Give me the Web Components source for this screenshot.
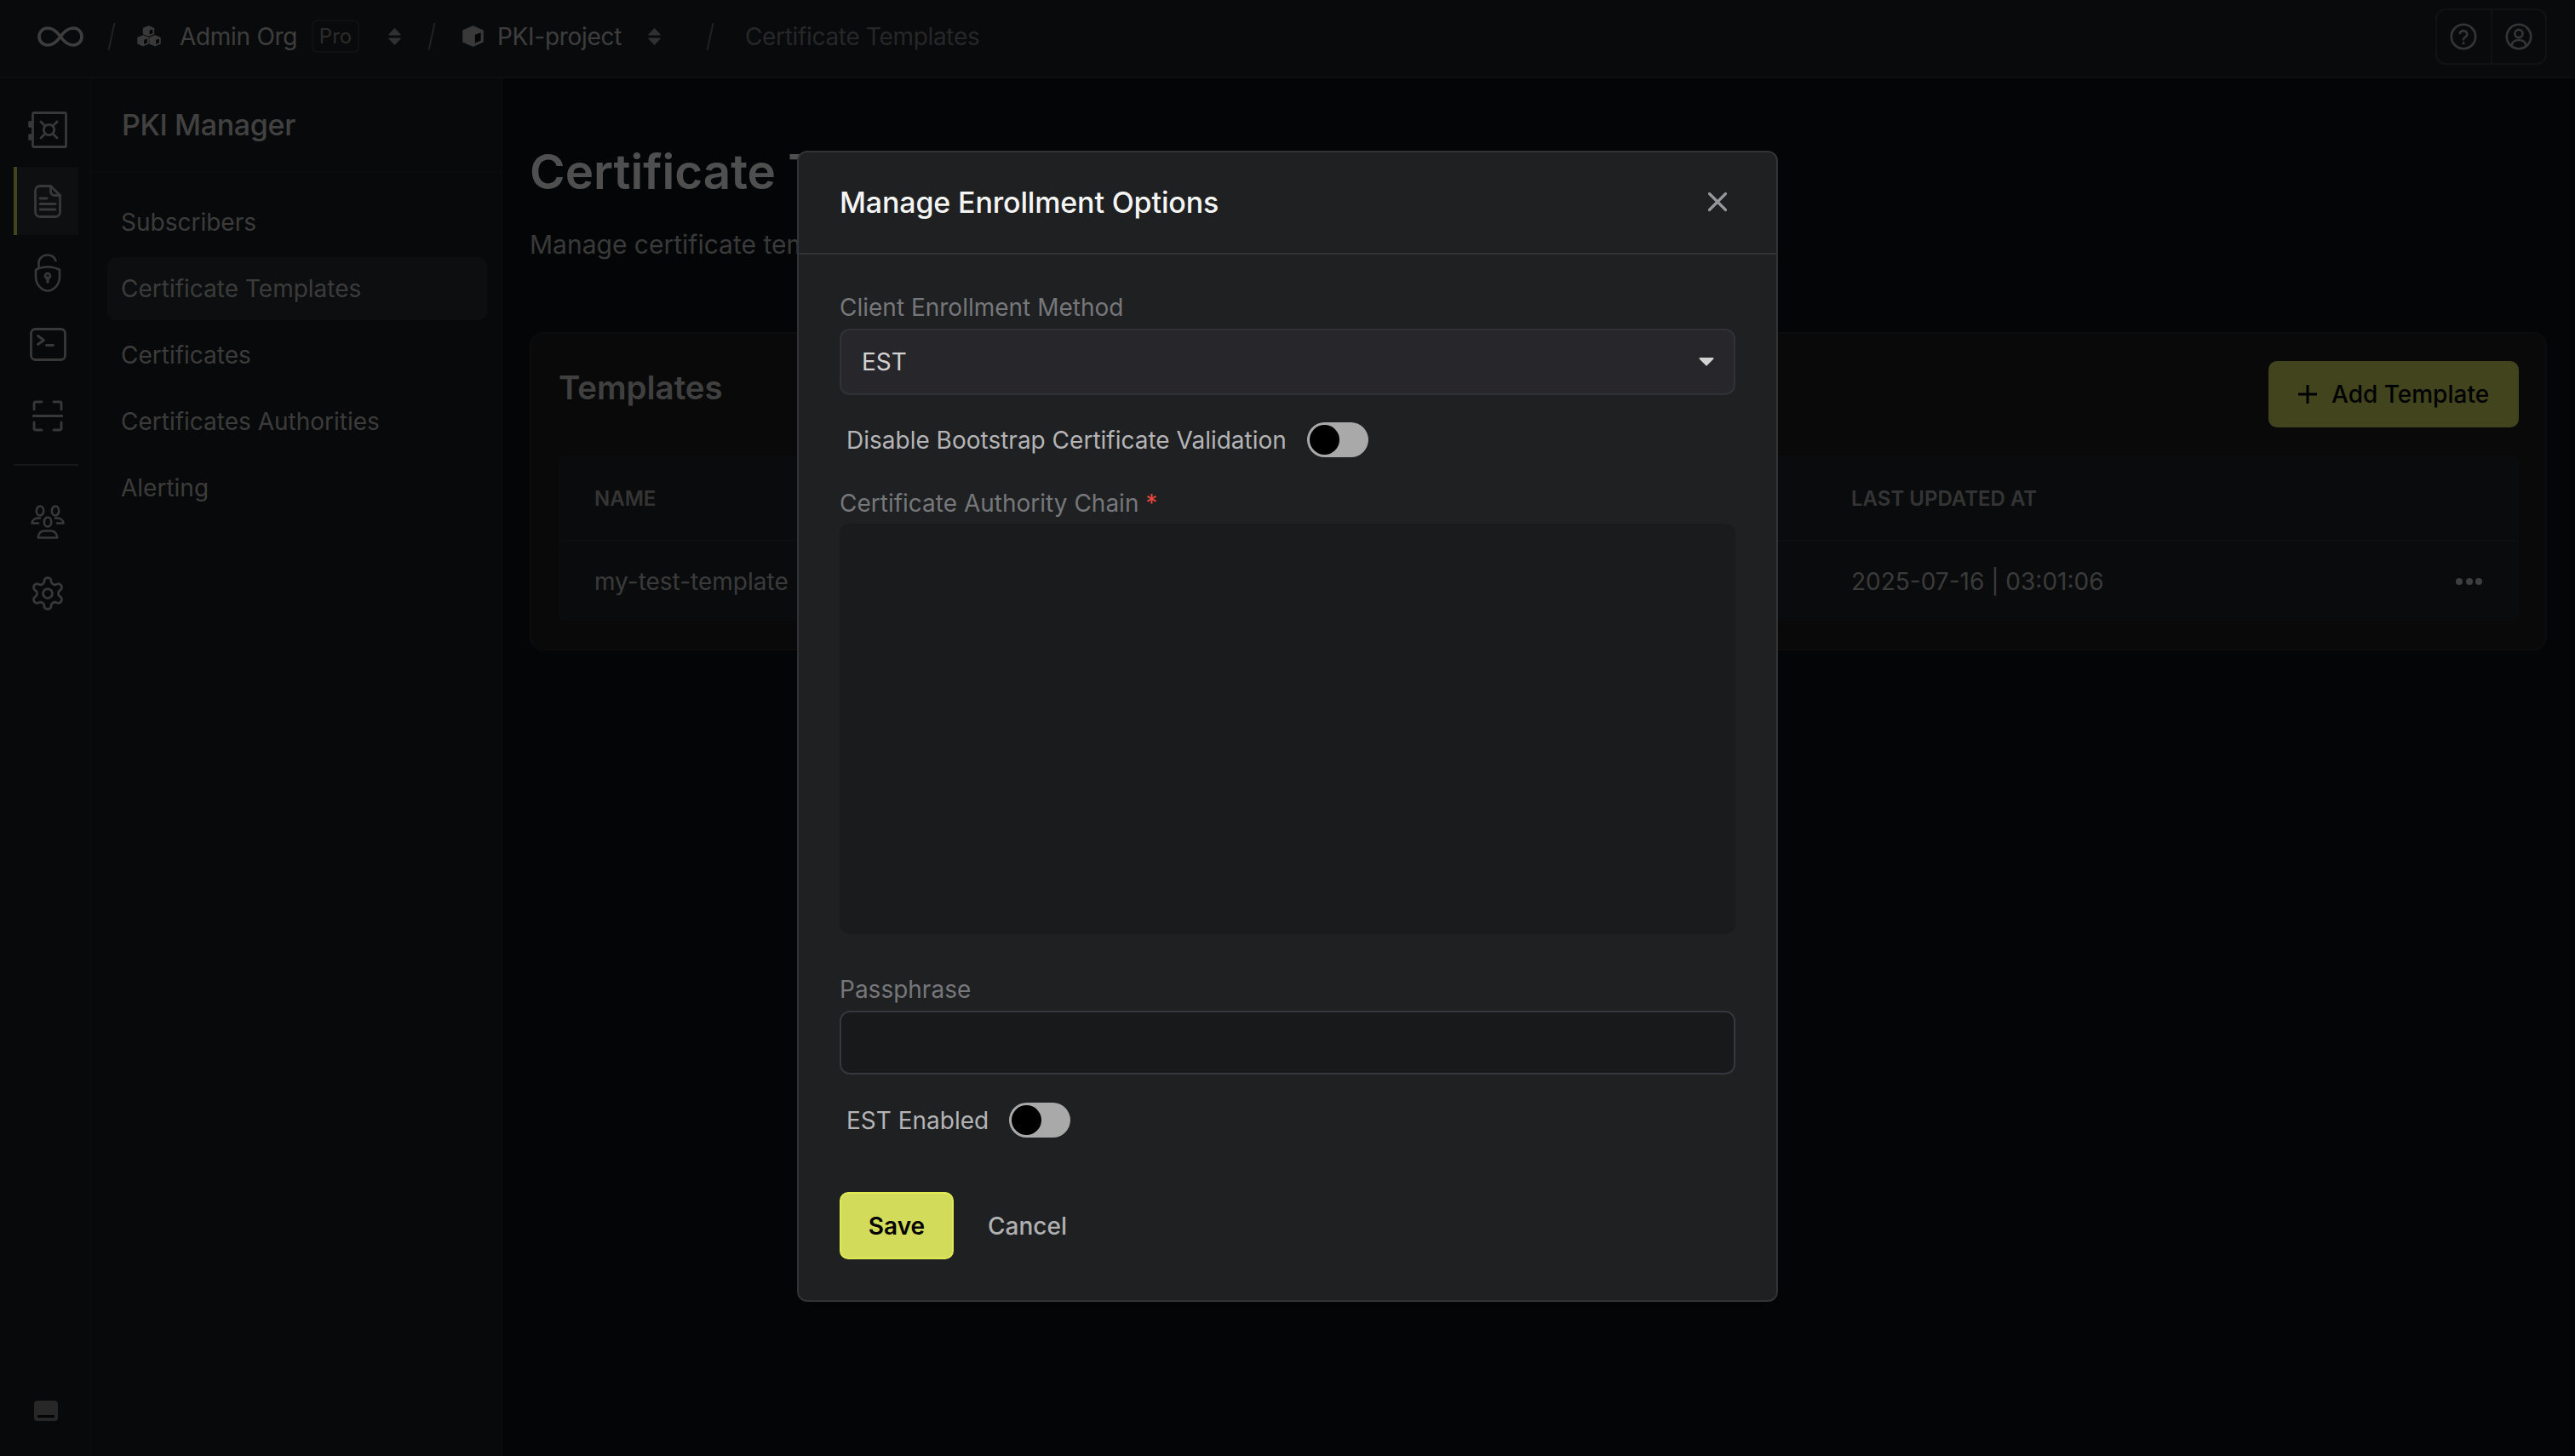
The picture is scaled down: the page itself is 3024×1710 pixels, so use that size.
<!DOCTYPE html>
<html lang="en"><head><meta charset="utf-8"><title>Certificate Templates</title>
<style>
html,body{margin:0;height:100%;background:#0c0e11;overflow:hidden}
body{font-family:Inter,"Noto Sans",sans-serif}
</style></head><body>
<app-shell>
  <top-bar slot="top"></top-bar>
  <icon-rail slot="rail"></icon-rail>
  <side-panel slot="panel" title-text="PKI Manager">
    <nav-item>Subscribers</nav-item>
    <nav-item active>Certificate Templates</nav-item>
    <nav-item>Certificates</nav-item>
    <nav-item>Certificates Authorities</nav-item>
    <nav-item>Alerting</nav-item>
  </side-panel>
  <main-view slot="main"></main-view>
</app-shell>
<modal-overlay>
  <modal-dialog heading="Manage Enrollment Options">
    <form-field label="Client Enrollment Method" style="margin-top:41px"><select-box>EST</select-box></form-field>
    <toggle-row style="margin-top:32px">Disable Bootstrap Certificate Validation</toggle-row>
    <form-field label="Certificate Authority Chain" required style="margin-top:34px;--gap:4px"><text-box style="height:482px;--bg:#1a1b1d;--bd:#1a1b1d"></text-box></form-field>
    <form-field label="Passphrase" style="margin-top:45px;--gap:5px"><text-box style="height:75px;--bg:#18191b;--bd:#36373c"></text-box></form-field>
    <toggle-row style="margin-top:33px">EST Enabled</toggle-row>
    <modal-actions style="margin-top:64px"></modal-actions>
  </modal-dialog>
</modal-overlay>
<script>
const S='fill="none" stroke="currentColor" stroke-linecap="round" stroke-linejoin="round"';
function define(name,html){
  customElements.define(name,class extends HTMLElement{
    constructor(){super();const r=this.attachShadow({mode:'open'});
      r.innerHTML=typeof html==='function'?html(this):html;}
    connectedCallback(){if(typeof html==='function')this.shadowRoot.innerHTML=html(this);}
  });
}
define('app-shell',`<style>
:host{display:grid;grid-template-columns:108px 482px 1fr;grid-template-rows:92px 1fr;width:3024px;height:1710px;overflow:hidden}
::slotted([slot=top]){grid-column:1/-1}
</style><slot name="top"></slot><slot name="rail"></slot><slot name="panel"></slot><slot name="main"></slot>`);

const slash=(ml)=>`<svg style="margin-left:${ml}px" width="10" height="34" viewBox="0 0 10 34"><path d="M8.5 1 1.500 33" stroke="#6a6b6e" stroke-width="2" fill="none"/></svg>`;
const sort=(ml)=>`<svg style="margin-left:${ml}px;color:#9a9a9a" width="17" height="22" viewBox="0 0 17 22"><path d="M8.5 1 15.5 8.2a.8.8 0 0 1-.6 1.3H2.1a.8.8 0 0 1-.6-1.3zM8.5 21 1.5 13.8a.8.8 0 0 1 .6-1.3H14.900a.8.8 0 0 1 .6 1.3z" fill="currentColor"/></svg>`;
const cube=(x,y,w,h)=>{const p=(a,b)=>`${(x+w*a).toFixed(2)} ${(y+h*b).toFixed(2)}`;
  return `<path d="M${p(.5,0)}L${p(1,.22)}L${p(1,.78)}L${p(.5,1)}L${p(0,.78)}L${p(0,.22)}Z" fill="currentColor" stroke="currentColor" stroke-width="1.500" stroke-linejoin="round"/><path d="M${p(.6,.42)}L${p(.9,.31)}L${p(.9,.72)}L${p(.6,.86)}Z" fill="#0e0f10"/>`;};
define('top-bar',`<style>
:host{display:flex;align-items:center;box-sizing:border-box;height:92px;padding:0 33px 5px 44px;background:#1f2124;border-bottom:2px solid #2b2d31;font:400 28px/40px Inter,sans-serif;color:#c4c4c5}
svg{flex:none;display:block}
.fx{flex:none;white-space:nowrap;letter-spacing:-.3px}
.pro{margin-left:18px;width:56px;height:39px;box-sizing:border-box;border:2px solid #36383c;border-radius:7px;font:400 24px/35px Inter,sans-serif;text-align:center;color:#8c8c8e}
.crumb{margin-left:36px;color:#7c7d80;letter-spacing:-.33px}
.tools{margin-left:auto;display:flex;width:131px;height:66px;box-sizing:border-box;border:2px solid #3a3c41;border-radius:12px;color:#ababad}
.tools>div{flex:1;display:flex;align-items:center;justify-content:center}
.tools>div+div{border-left:2px solid #3a3c41}
</style>
<svg width="54" height="24" viewBox="0 0 54 24" fill="none" stroke="#c5c5c6" stroke-width="3.600"><path d="M27 12C22 5 18 2 12 2 6 2 2 6.5 2 12s4 10 10 10c6 0 10-3 15-10 5-7 9-10 15-10 6 0 10 4.5 10 10s-4 10-10 10c-6 0-10-3-15-10z"/></svg>
${slash(28)}
<svg style="margin-left:25px;color:#b8b8b9" width="29" height="25" viewBox="0 0 29 25">${cube(7.5,1,12,11)}${cube(1,12,12,11.5)}${cube(15,12,12,11.5)}</svg>
<span class="fx" style="margin-left:21px;width:137px">Admin Org</span>
<span class="pro">Pro</span>
${sort(33)}
${slash(30)}
<svg style="margin-left:30px;color:#b8b8b9" width="27" height="25" viewBox="0 0 27 25">${cube(2,1,23,23)}</svg>
<span class="fx" style="margin-left:15px;width:146px">PKI-project</span>
${sort(30)}
${slash(52)}
<span class="fx crumb">Certificate Templates</span>
<div class="tools">
 <div><svg width="32" height="32" viewBox="0 0 32 32" ${S} stroke-width="2.600"><circle cx="16" cy="16" r="14.200"/><path d="M11.800 12a4.400 4.400 0 0 1 8.500 1.400c0 2.900-4.300 3.300-4.300 6"/><path d="M16 23.500v.2" stroke-width="3"/></svg></div>
 <div><svg width="32" height="32" viewBox="0 0 32 32" ${S} stroke-width="2.600"><circle cx="16" cy="16" r="14.200"/><circle cx="16" cy="12.500" r="4.600"/><path d="M7.500 26.500c.7-4.500 3.800-6.500 8.500-6.500s7.800 2 8.500 6.500"/></svg></div>
</div>`);

define('rail-item',`<style>
:host{display:flex;align-items:center;justify-content:center;flex:none;box-sizing:border-box;width:76px;height:80px;margin-left:16px;border-left:4px solid transparent;color:#b4b4b6}
:host([active]){border-left-color:#d2dc5a;background:#2e3034}
::slotted(svg){display:block}
</style><slot></slot>`);
define('icon-rail',`<style>
:host{display:flex;flex-direction:column;gap:4px;box-sizing:border-box;padding:20px 0 41px;background:#1c1e21;border-right:2px solid #232528;height:1618px}
hr{border:0;height:2px;margin:13px 0 22px 16px;width:76px;background:#4c4e53;flex:none}
.bottom{margin:auto 0 0 40px;width:28px;height:24px;border-radius:4px;background:#7d7e80;flex:none;overflow:hidden}
.bar{height:3px;margin:17px 4px 0;background:#0d0e10;border-radius:1px}
</style>
<rail-item><svg width="46" height="43" viewBox="0 0 46 43" ${S} stroke-width="2.800"><rect x="5.500" y="1.500" width="39" height="40" rx="1.500"/><path d="M1 12h4v6H1zM1 27h4v6H1z" fill="currentColor" stroke-width="1.500"/><circle cx="24.500" cy="21.500" r="6.200"/><path d="M20 17l-5-5M29 17l5-5M20 26l-5 5M29 26l5 5"/></svg></rail-item>
<rail-item active><svg width="32" height="39" viewBox="0 0 32 39" ${S} stroke-width="2.800"><path d="M7 1.500h12.500L30.500 12.500V32a5.500 5.500 0 0 1-5.500 5.500H7A5.500 5.500 0 0 1 1.500 32V7A5.500 5.500 0 0 1 7 1.500z"/><path d="M19.500 1.500V8a4.500 4.500 0 0 0 4.500 4.500h6.500M7 16h8M7 22.500h18M7 29h18"/></svg></rail-item>
<rail-item><svg width="32" height="45" viewBox="0 0 32 45" ${S} stroke-width="2.600"><path d="M16 15.500c6 0 11 1.800 14 3.500v8c0 9.500-7.500 16.500-14 16.500S2 36.500 2 27v-8c3-1.700 8-3.500 14-3.500z"/><path d="M5.500 16.500V11C5.500 5 10.500 1.500 15.500 1.500c5 0 8.500 2.500 10 6.500"/><circle cx="16" cy="26" r="3"/><path d="M16 28v5" stroke-width="3.400"/></svg></rail-item>
<rail-item><svg width="43" height="39" viewBox="0 0 43 39" ${S} stroke-width="2.800"><rect x="1.500" y="1.500" width="40" height="36" rx="5"/><path d="M9.500 9.500l7 5-7 5M19.500 20.500h8"/></svg></rail-item>
<rail-item><svg width="36" height="37" viewBox="0 0 36 37" ${S} stroke-width="2.800"><path d="M2 11V4a2 2 0 0 1 2-2h7M25 2h7a2 2 0 0 1 2 2v7M2 26v7a2 2 0 0 0 2 2h7M25 35h7a2 2 0 0 0 2-2v-7M1 18.500h34"/></svg></rail-item>
<hr>
<rail-item><svg width="40" height="40" viewBox="0 0 40 40" ${S} stroke-width="2.600"><ellipse cx="11" cy="7" rx="4.200" ry="5.500"/><ellipse cx="29" cy="7" rx="4.200" ry="5.500"/><ellipse cx="20" cy="20" rx="4.200" ry="5.500"/><path d="M11 15.500H8.500a7 7 0 0 0-7 6H9M29 15.500h2.500a7 7 0 0 1 7 6H31M9 38.500v-1a7 7 0 0 1 7-7h8a7 7 0 0 1 7 7v1z"/></svg></rail-item>
<rail-item><svg width="44" height="44" viewBox="0 0 24 24" ${S} stroke-width="1.500"><path d="M12.220 2h-.44a2 2 0 0 0-2 2v.18a2 2 0 0 1-1 1.730l-.43.25a2 2 0 0 1-2 0l-.15-.08a2 2 0 0 0-2.730.73l-.22.38a2 2 0 0 0 .73 2.730l.15.1a2 2 0 0 1 1 1.720v.51a2 2 0 0 1-1 1.740l-.15.09a2 2 0 0 0-.73 2.730l.22.38a2 2 0 0 0 2.730.73l.15-.08a2 2 0 0 1 2 0l.43.25a2 2 0 0 1 1 1.730V20a2 2 0 0 0 2 2h.44a2 2 0 0 0 2-2v-.18a2 2 0 0 1 1-1.730l.43-.25a2 2 0 0 1 2 0l.15.08a2 2 0 0 0 2.730-.73l.22-.39a2 2 0 0 0-.73-2.730l-.15-.08a2 2 0 0 1-1-1.740v-.5a2 2 0 0 1 1-1.740l.15-.09a2 2 0 0 0 .73-2.730l-.22-.38a2 2 0 0 0-2.730-.73l-.15.08a2 2 0 0 1-2 0l-.43-.25a2 2 0 0 1-1-1.730V4a2 2 0 0 0-2-2z"/><circle cx="12" cy="12" r="3"/></svg></rail-item>
<div class="bottom"><div class="bar"></div></div>`);

define('side-panel',h=>`<style>
:host{display:block;box-sizing:border-box;background:#1b1d20;border-right:2px solid #232528}
header{height:111px;box-sizing:border-box;padding-left:35px;border-bottom:2px solid #232528;display:flex;align-items:center;font:500 34px/44px Inter,sans-serif;letter-spacing:-.35px;color:#d0d0d1}
nav{display:flex;flex-direction:column;gap:4px;padding:21px 16px 0 18px}
</style><header>${h.getAttribute('title-text')||''}</header><nav><slot></slot></nav>`);
define('nav-item',`<style>
:host{display:flex;align-items:center;box-sizing:border-box;height:74px;padding-left:16px;border-radius:10px;font:400 28px/40px Inter,sans-serif;color:#bdbdbe}
:host([active]){background:#2b2d31}
</style><slot></slot>`);

define('main-view',`<style>
:host{display:block;box-sizing:border-box;padding:74px 33px 0 32px;background:#0e1014}
h1{margin:0;font:600 56.500px/72px Inter,sans-serif;color:#fff;white-space:nowrap}
p{margin:29px 0 0;font:400 30px/40px Inter,sans-serif;color:#b6b7b9;white-space:nowrap}
.card{margin-top:83px;height:374px;box-sizing:border-box;padding:32px 31px 0 32px;background:#1d1f22;border:2px solid #26282c;border-radius:16px}
.head{display:flex;justify-content:space-between;align-items:flex-start}
h2{margin:0;padding-top:9px;font:600 38.400px/44px Inter,sans-serif;color:#cfcfd0}
button{all:unset;display:flex;align-items:center;gap:16px;box-sizing:border-box;width:294px;height:78px;padding-left:34px;background:#d2dc5a;border-radius:10px;font:500 28px/40px Inter,sans-serif;color:#000;white-space:nowrap}
.table{margin-top:33px;height:194px;background:#222427;border:2px solid #27292d;border-radius:8px;box-sizing:border-box;font:400 28px/40px Inter,sans-serif;color:#bcbcbd}
.row{display:grid;grid-template-columns:1476px 1fr 72px;align-items:center;padding-left:40px}
.row.h{height:97px;border-bottom:2px solid #2c2e32;font:600 24px/32px Inter,sans-serif;color:#a9a9aa}
.row.b{height:93px}
.dots{display:flex;gap:3.500px}.dots i{width:8px;height:8px;border-radius:50%;background:#c9c9ca}
</style>
<h1>Certificate Templates</h1>
<p>Manage certificate templates for issuing certificates</p>
<div class="card">
 <div class="head"><h2>Templates</h2><button><svg width="24" height="24" viewBox="0 0 24 24" fill="none" stroke="#000" stroke-width="3"><path d="M12 1v22M1 12h22"/></svg><span>Add Template</span></button></div>
 <div class="table">
  <div class="row h"><span>NAME</span><span>LAST UPDATED AT</span><span></span></div>
  <div class="row b"><span>my-test-template</span><span>2025-07-16 | 03:01:06</span><span class="dots"><i></i><i></i><i></i></span></div>
 </div>
</div>`);

define('modal-overlay',`<style>
:host{position:fixed;inset:0;box-sizing:border-box;display:flex;align-items:center;justify-content:center;padding-bottom:4px;background:rgba(0,0,0,.69)}
</style><slot></slot>`);
define('modal-dialog',h=>`<style>
:host{display:block;box-sizing:border-box;width:1152px;height:1352px;background:#1f2022;border:2px solid #313337;border-radius:12px;font-family:Inter,sans-serif}
header{height:120px;box-sizing:border-box;display:flex;align-items:center;justify-content:space-between;padding:0 57px 0 48px;border-bottom:2px solid #313337;font:500 34px/44px Inter,sans-serif;letter-spacing:-.16px;color:#f5f5f5}
header svg{display:block;margin-top:-3px}
.body{padding:1px 48px 0}
</style><header><span>${h.getAttribute('heading')||''}</span><svg width="24" height="24" viewBox="0 0 24 24" fill="none" stroke="#97989b" stroke-width="3.200" stroke-linecap="round"><path d="M2.500 2.500l19 19M21.500 2.500l-19 19"/></svg></header><div class="body"><slot></slot></div>`);
define('form-field',h=>`<style>
:host{display:block}
label{display:block;height:40px;font:400 28px/40px Inter,sans-serif;color:#76777a}
b{font-weight:400;color:#e5483c}
div{margin-top:var(--gap,5px)}
</style><label>${h.getAttribute('label')||''}${h.hasAttribute('required')?' <b>*</b>':''}</label><div><slot></slot></div>`);
define('select-box',`<style>
:host{display:flex;align-items:center;justify-content:space-between;box-sizing:border-box;height:78px;padding:0 23px 0 24px;background:#26262b;border:2px solid #313237;border-radius:12px;font:400 28px/40px Inter,sans-serif;color:#d2d2d3}
svg{display:block}
</style><slot></slot><svg width="18" height="10" viewBox="0 0 18 10"><path d="M1.500 0h15a1 1 0 0 1 .7 1.700L9.700 9.300a1 1 0 0 1-1.400 0L.8 1.700A1 1 0 0 1 1.500 0z" fill="#d2d2d3"/></svg>`);
define('text-box',`<style>
:host{display:block;box-sizing:border-box;background:var(--bg);border:2px solid var(--bd);border-radius:12px}
</style>`);
define('toggle-row',`<style>
:host{display:flex;align-items:center;gap:24px;height:41px;padding-left:8px;font:400 28px/40px Inter,sans-serif;color:#b4b4b6}
.t{width:72px;height:41px;box-sizing:border-box;padding:3px;border-radius:21px;background:#a9a9aa;flex:none}
.k{width:35px;height:35px;border-radius:50%;background:#000}
</style><span><slot></slot></span><div class="t"><div class="k"></div></div>`);
define('modal-actions',`<style>
:host{display:flex;align-items:center;gap:40px}
.save{box-sizing:border-box;width:134px;height:79px;display:flex;align-items:center;justify-content:center;background:#d2dc5a;border:2px solid #e0ea55;border-radius:10px;font:600 28px/40px Inter,sans-serif;color:#000}
.cancel{font:500 28px/40px Inter,sans-serif;color:#b0b0b2}
</style><div class="save">Save</div><div class="cancel">Cancel</div>`);
</script>
</body></html>
